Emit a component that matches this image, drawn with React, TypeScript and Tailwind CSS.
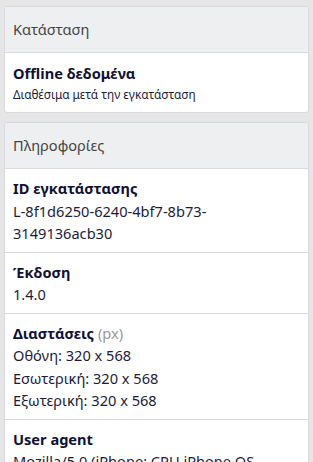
const font = { fontFamily: '"Noto Sans", "Open Sans", sans-serif' };

function Card({ title, children }: { title: string; children: React.ReactNode }) {
  return (
    <div className="shrink-0 rounded-[3px] border border-[#d8d8de] bg-white overflow-hidden">
      <div className="h-[46px] flex items-center px-[8px] bg-[#eeeff1] border-b border-[#d8d8de] text-[14.6px] text-[#444]">
        {title}
      </div>
      {children}
    </div>
  );
}

function Row({ label, extra, lines }: { label: string; extra?: string; lines: string[] }) {
  return (
    <div className="px-[8px] pt-[8px] pb-[7px] border-b border-[#d8d8de] last:border-b-0">
      <div className="text-[14.6px] leading-[22.5px] font-bold text-[#111133]">
        {label}
        {extra && <span className="font-normal text-[#999]"> {extra}</span>}
      </div>
      {lines.map((l) => (
        <div key={l} className="text-[14.6px] leading-[22.5px] text-[#1d1d3a]">
          {l}
        </div>
      ))}
    </div>
  );
}

export default function App() {
  return (
    <div className="h-[462px] overflow-hidden bg-[#e6e6e6] px-[4px] pt-[6px] flex flex-col gap-[9px]" style={font}>
      <Card title="Κατάσταση">
        <div className="px-[8px] pt-[9px] pb-[8px]">
          <div className="text-[14.6px] leading-[22px] font-bold text-[#111133]">Offline δεδομένα</div>
          <div className="text-[11.8px] leading-[20px] text-[#1d1d3a]">Διαθέσιμα μετά την εγκατάσταση</div>
        </div>
      </Card>
      <Card title="Πληροφορίες">
        <Row label="ID εγκατάστασης" lines={["L-8f1d6250-6240-4bf7-8b73-", "3149136acb30"]} />
        <Row label="Έκδοση" lines={["1.4.0"]} />
        <Row
          label="Διαστάσεις"
          extra="(px)"
          lines={["Οθόνη: 320 x 568", "Εσωτερική: 320 x 568", "Εξωτερική: 320 x 568"]}
        />
        <Row
          label="User agent"
          lines={["Mozilla/5.0 (iPhone; CPU iPhone OS", "10_3_1 like Mac OS X) AppleWebKit/603.1.30"]}
        />
      </Card>
    </div>
  );
}
